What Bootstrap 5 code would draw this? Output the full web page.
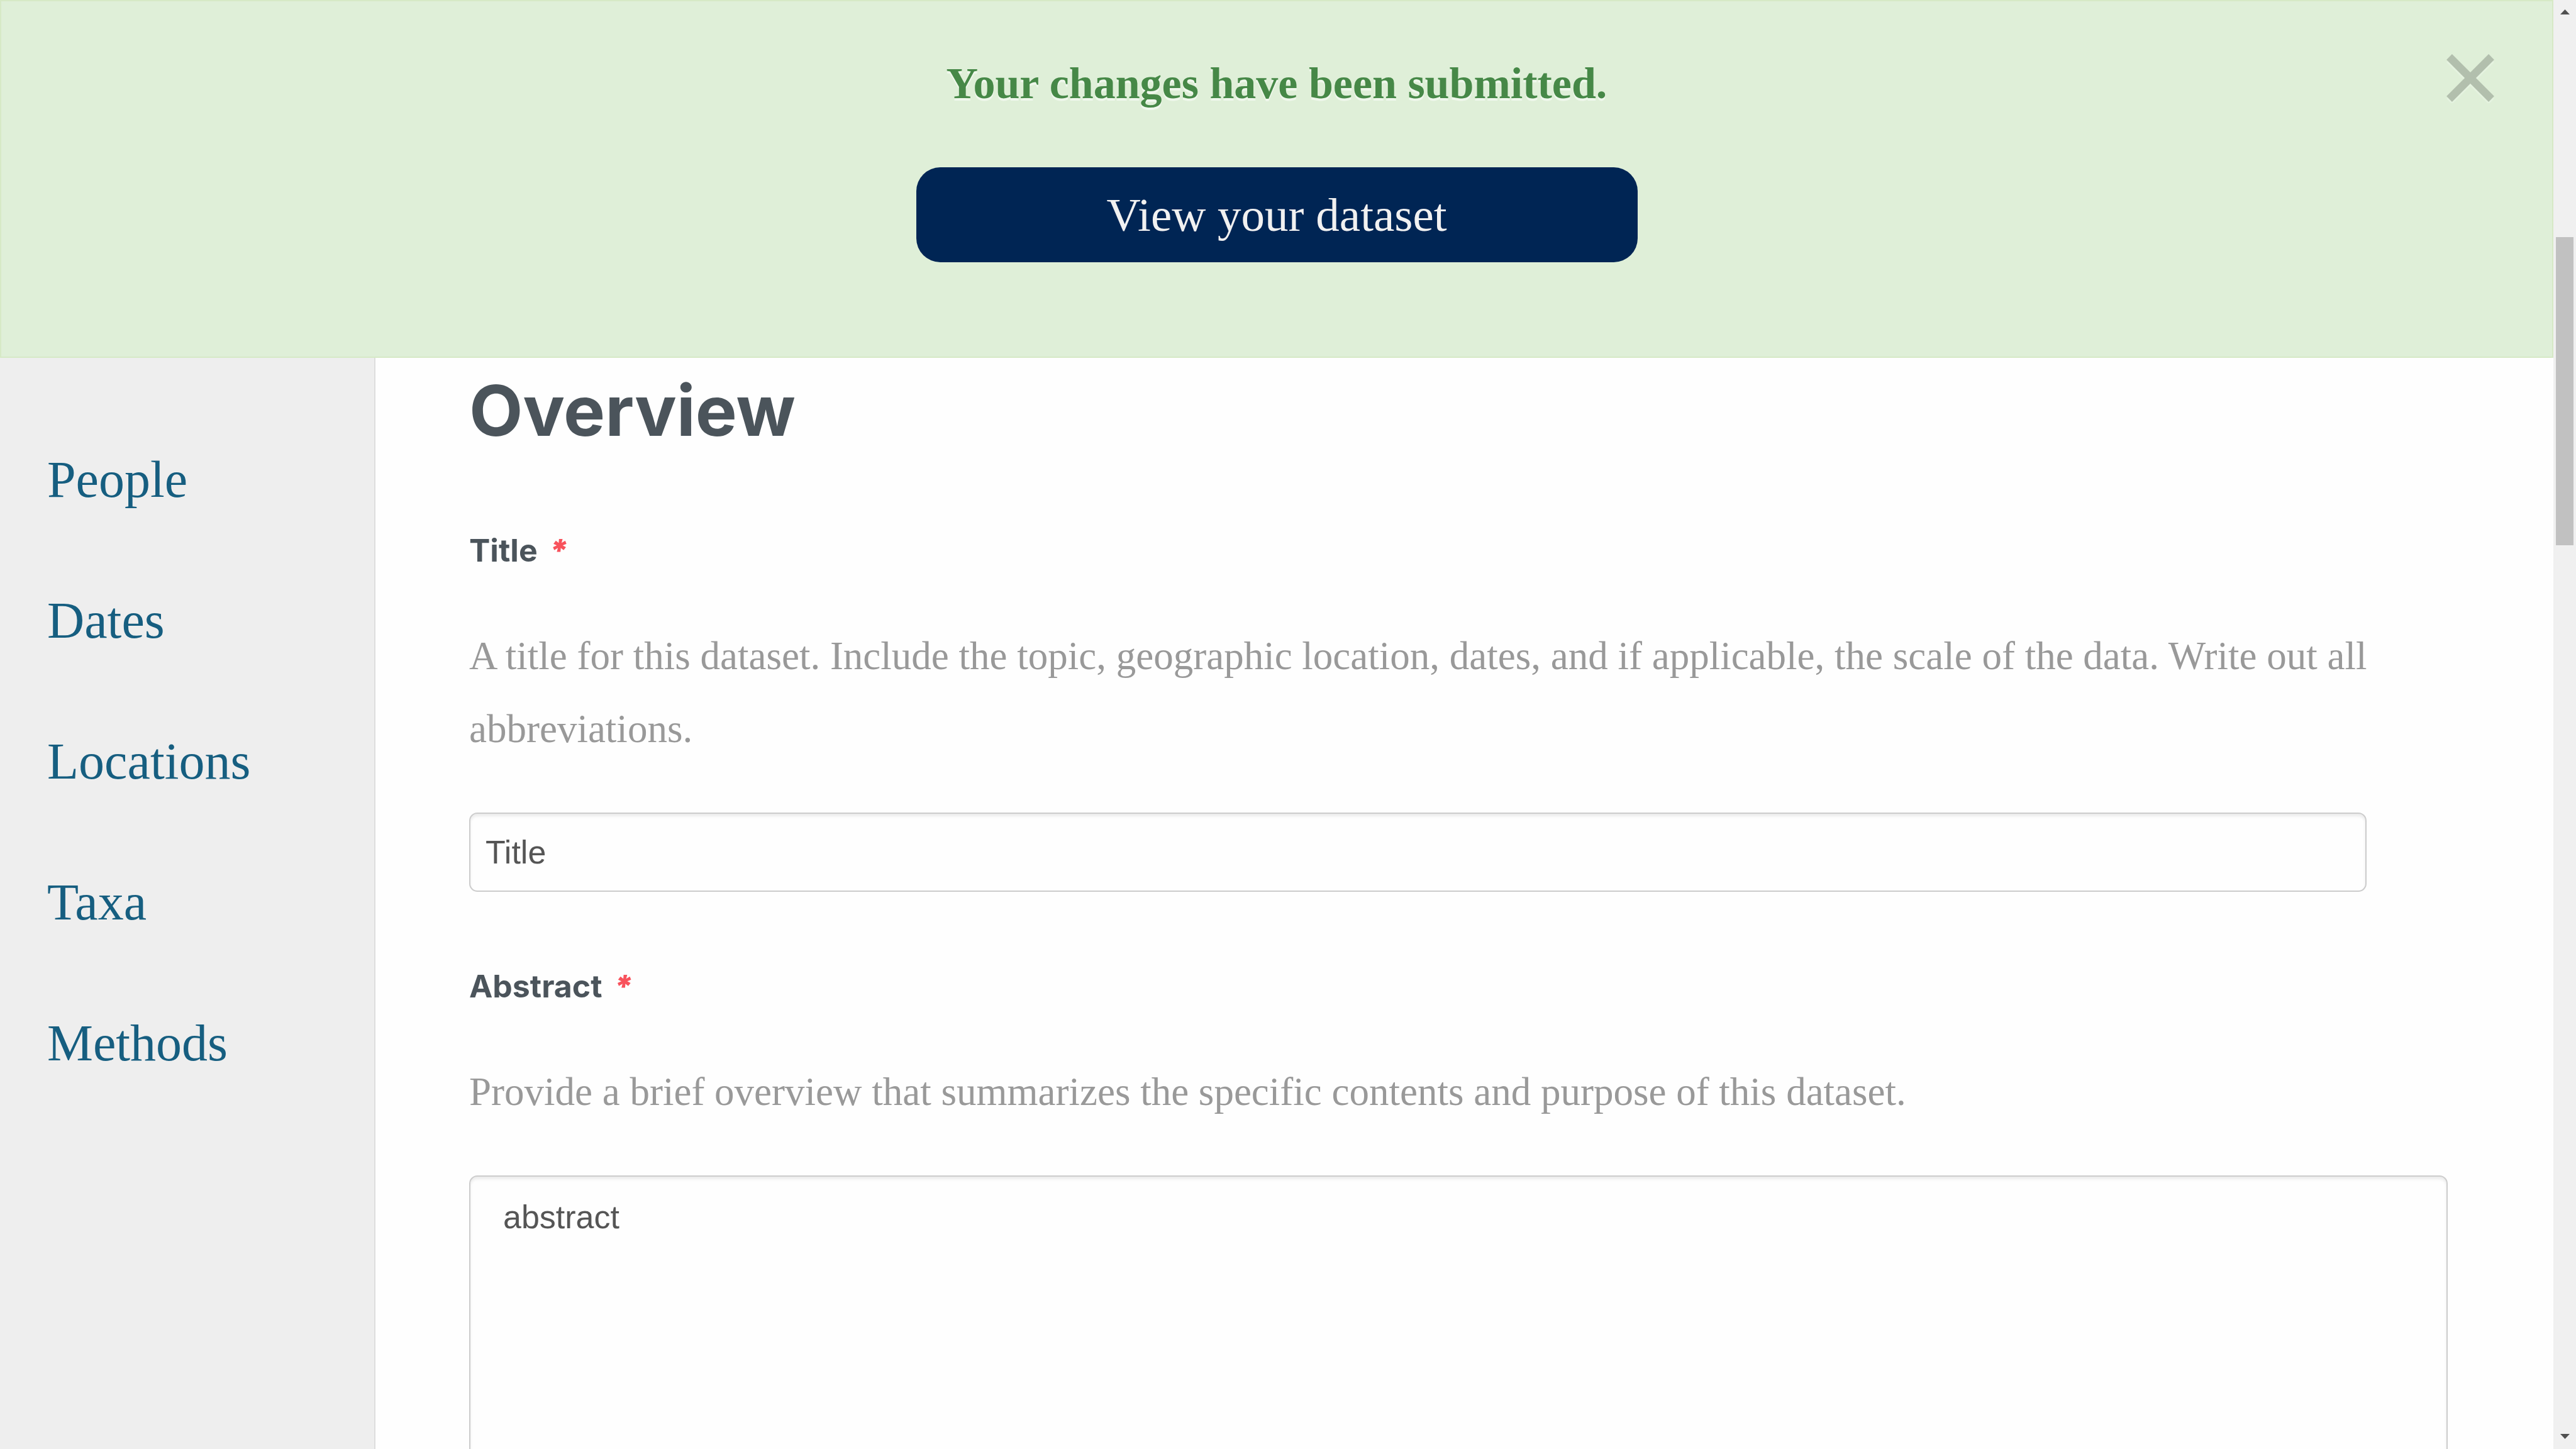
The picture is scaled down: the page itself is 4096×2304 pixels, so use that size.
<!DOCTYPE html>
<html lang="en">
<head>
<meta charset="utf-8">
<meta name="viewport" content="width=device-width, initial-scale=1">
<title>Dataset editor</title>
<link href="https://cdn.jsdelivr.net/npm/bootstrap@5.3.0/dist/css/bootstrap.min.css" rel="stylesheet">
<style>
  body { font-family: "Liberation Serif", serif; background: #fefefe; }
  .notice { background: #dfefd8; border: 2px solid #d6e9c6; padding: 85px 160px 150px; gap: 87px; }
  .notice-text { font-size: 70px; line-height: 92px; color: #468847; text-shadow: 0 4px 0 rgba(255,255,255,.5); }
  .notice-action { width: 1147px; max-width: 100%; padding: 24px; border: 0; border-radius: 38px;
    font-size: 75px; line-height: 103px; --bs-btn-bg: #002554; --bs-btn-color: #f1f1f1;
    --bs-btn-hover-bg: #003a80; --bs-btn-hover-color: #fff; }
  .notice-close { top: 82px; right: 92px; line-height: 0; }
  .notice-close svg { width: 76px; height: 80px; }
  .section-nav { flex: 0 0 597px; background: #eee; border-right: 2px solid #ddd; padding: 82px 0 0; }
  .section-nav .nav-link { font-size: 82px; line-height: 224px; padding: 0 75px; color: #165e80; }
  .editor { padding: 24px 168px 0 149px; }
  .editor h1 { font-family: Inter, sans-serif; font-size: 111px; line-height: 120px; color: #4b545b; margin: 0 0 132px; }
  .field-label { font-family: Inter, sans-serif; font-size: 50px; line-height: 60px; color: #4b545b; margin: 0 0 80px; gap: 18px; }
  .required { color: #f8525c; font-weight: 900; }
  .hint { font-size: 63px; line-height: 116px; color: #999; margin: 0 0 75px; }
  .entry { font-family: "Liberation Sans", sans-serif; font-size: 52px; line-height: 72px; color: #555;
    background: #fefefe; border: 2px solid #ccc; border-radius: 13px; box-shadow: inset 0 4px 4px rgba(0,0,0,.075); }
  .entry-line { width: calc(100% - 129px); padding: 25px 24px; margin-bottom: 120px; }
  .entry-area { padding: 28px 52px; resize: none; overflow: hidden; }
  .scroll-track { flex: 0 0 36px; background: #f0f0f0; padding: 15px 4px 16px; }
  .scroll-thumb { width: 28px; height: 490px; background: #c1c1c1; margin-bottom: auto; margin-top: 354px; }
  .scroll-track svg { width: 15px; height: 8px; }
</style>
</head>
<body>
<div class="d-flex vh-100 overflow-hidden">
  <div class="d-flex flex-column flex-grow-1 overflow-hidden">
    <div class="notice position-relative d-flex flex-column align-items-center text-center flex-shrink-0" role="alert">
      <strong class="notice-text">Your changes have been submitted.</strong>
      <a class="btn notice-action" href="#">View your dataset</a>
      <button type="button" class="btn notice-close position-absolute border-0 p-0" aria-label="Close">
        <svg viewBox="0 0 76 80" fill="none" stroke-width="12.5">
          <path d="M4.5 10.5 71.5 77.5M71.5 10.5 4.5 77.5" stroke="#e5f3e0"/>
          <path d="M4.5 6.5 71.5 73.5M71.5 6.5 4.5 73.5" stroke="#b2bfad"/>
        </svg>
      </button>
    </div>
    <div class="d-flex flex-grow-1 overflow-hidden">
      <nav class="section-nav nav flex-column flex-nowrap" aria-label="Sections">
        <a class="nav-link" href="#">People</a>
        <a class="nav-link" href="#">Dates</a>
        <a class="nav-link" href="#">Locations</a>
        <a class="nav-link" href="#">Taxa</a>
        <a class="nav-link" href="#">Methods</a>
      </nav>
      <main class="editor flex-grow-1">
        <h1 class="fw-bold">Overview</h1>
        <label class="field-label d-flex fw-bold" for="title">Title <em class="required">*</em></label>
        <p class="hint">A title for this dataset. Include the topic, geographic location, dates, and if applicable, the scale of the data. Write out all abbreviations.</p>
        <input class="form-control entry entry-line" id="title" type="text" value="Title">
        <label class="field-label d-flex fw-bold" for="abstract">Abstract <em class="required">*</em></label>
        <p class="hint">Provide a brief overview that summarizes the specific contents and purpose of this dataset.</p>
        <textarea class="form-control entry entry-area" id="abstract" rows="10">abstract</textarea>
      </main>
    </div>
  </div>
  <div class="scroll-track d-flex flex-column align-items-center" aria-hidden="true">
    <svg viewBox="0 0 15 8"><path d="M0 8 7.5 0 15 8z" fill="#505050"/></svg>
    <div class="scroll-thumb"></div>
    <svg viewBox="0 0 15 8"><path d="M0 0 7.5 8 15 0z" fill="#505050"/></svg>
  </div>
</div>
<script src="https://cdn.jsdelivr.net/npm/bootstrap@5.3.0/dist/js/bootstrap.bundle.min.js"></script>
</body>
</html>
